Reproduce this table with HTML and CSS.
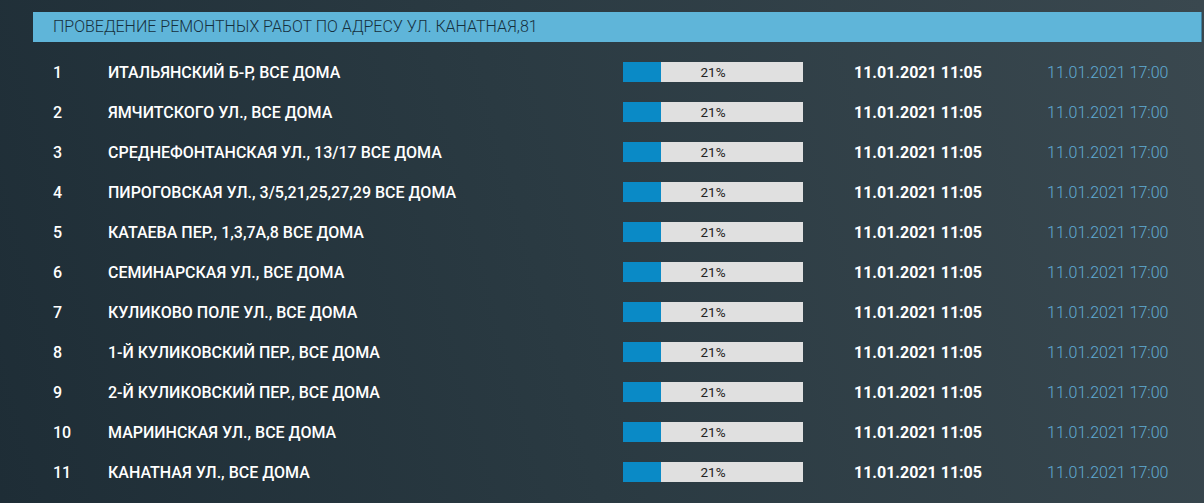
FILE: index.html
```html
<!DOCTYPE html>
<html lang="ru">
<head>
<meta charset="utf-8">
<link rel="stylesheet" href="styles.css">
</head>
<body>
<div class="page">
  <div class="title">ПРОВЕДЕНИЕ РЕМОНТНЫХ РАБОТ ПО АДРЕСУ УЛ. КАНАТНАЯ,81</div>
  <div class="list">
    <div class="row"><span class="num">1</span><span class="name">ИТАЛЬЯНСКИЙ Б-Р, ВСЕ ДОМА</span><div class="bar"><div class="fill" style="width:21%"></div><span class="pct">21%</span></div><span class="start">11.01.2021 11:05</span><span class="end">11.01.2021 17:00</span></div>
    <div class="row"><span class="num">2</span><span class="name">ЯМЧИТСКОГО УЛ., ВСЕ ДОМА</span><div class="bar"><div class="fill" style="width:21%"></div><span class="pct">21%</span></div><span class="start">11.01.2021 11:05</span><span class="end">11.01.2021 17:00</span></div>
    <div class="row"><span class="num">3</span><span class="name">СРЕДНЕФОНТАНСКАЯ УЛ., 13/17 ВСЕ ДОМА</span><div class="bar"><div class="fill" style="width:21%"></div><span class="pct">21%</span></div><span class="start">11.01.2021 11:05</span><span class="end">11.01.2021 17:00</span></div>
    <div class="row"><span class="num">4</span><span class="name">ПИРОГОВСКАЯ УЛ., 3/5,21,25,27,29 ВСЕ ДОМА</span><div class="bar"><div class="fill" style="width:21%"></div><span class="pct">21%</span></div><span class="start">11.01.2021 11:05</span><span class="end">11.01.2021 17:00</span></div>
    <div class="row"><span class="num">5</span><span class="name">КАТАЕВА ПЕР., 1,3,7А,8 ВСЕ ДОМА</span><div class="bar"><div class="fill" style="width:21%"></div><span class="pct">21%</span></div><span class="start">11.01.2021 11:05</span><span class="end">11.01.2021 17:00</span></div>
    <div class="row"><span class="num">6</span><span class="name">СЕМИНАРСКАЯ УЛ., ВСЕ ДОМА</span><div class="bar"><div class="fill" style="width:21%"></div><span class="pct">21%</span></div><span class="start">11.01.2021 11:05</span><span class="end">11.01.2021 17:00</span></div>
    <div class="row"><span class="num">7</span><span class="name">КУЛИКОВО ПОЛЕ УЛ., ВСЕ ДОМА</span><div class="bar"><div class="fill" style="width:21%"></div><span class="pct">21%</span></div><span class="start">11.01.2021 11:05</span><span class="end">11.01.2021 17:00</span></div>
    <div class="row"><span class="num">8</span><span class="name">1-Й КУЛИКОВСКИЙ ПЕР., ВСЕ ДОМА</span><div class="bar"><div class="fill" style="width:21%"></div><span class="pct">21%</span></div><span class="start">11.01.2021 11:05</span><span class="end">11.01.2021 17:00</span></div>
    <div class="row"><span class="num">9</span><span class="name">2-Й КУЛИКОВСКИЙ ПЕР., ВСЕ ДОМА</span><div class="bar"><div class="fill" style="width:21%"></div><span class="pct">21%</span></div><span class="start">11.01.2021 11:05</span><span class="end">11.01.2021 17:00</span></div>
    <div class="row"><span class="num">10</span><span class="name">МАРИИНСКАЯ УЛ., ВСЕ ДОМА</span><div class="bar"><div class="fill" style="width:21%"></div><span class="pct">21%</span></div><span class="start">11.01.2021 11:05</span><span class="end">11.01.2021 17:00</span></div>
    <div class="row"><span class="num">11</span><span class="name">КАНАТНАЯ УЛ., ВСЕ ДОМА</span><div class="bar"><div class="fill" style="width:21%"></div><span class="pct">21%</span></div><span class="start">11.01.2021 11:05</span><span class="end">11.01.2021 17:00</span></div>
  </div>
</div>
</body>
</html>
```

FILE: styles.css
```css
html, body {
  margin: 0;
  padding: 0;
  height: 100%;
}
body {
  background: linear-gradient(75deg, #1e2d36 0%, #2a3a42 45%, #3a484f 100%);
  font-family: Roboto, "Liberation Sans", sans-serif;
  color: #ffffff;
  overflow: hidden;
}
.page {
  padding: 12px 2px 0 33px;
}
.title {
  height: 30px;
  background: #5fb5d9;
  border-right: 1px solid #3f7f9c;
  color: #16303d;
  font-size: 16px;
  font-weight: 300;
  line-height: 30px;
  padding-left: 20px;
}
.list {
  padding-top: 10px;
}
.row {
  display: grid;
  grid-template-columns: 55px 515px 231px 193px 1fr;
  align-items: center;
  height: 40px;
  padding-left: 20px;
  font-size: 16px;
}
.num {
  font-weight: 500;
}
.name {
  font-weight: 500;
}
.bar {
  position: relative;
  height: 20px;
  width: 180px;
  background: #e0e0e0;
}
.fill {
  height: 100%;
  background: #0a8ac6;
}
.pct {
  position: absolute;
  inset: 0;
  text-align: center;
  line-height: 20px;
  font-size: 13.5px;
  color: #222;
}
.start {
  font-weight: 700;
}
.end {
  font-weight: 300;
  color: #60abd3;
}
```
